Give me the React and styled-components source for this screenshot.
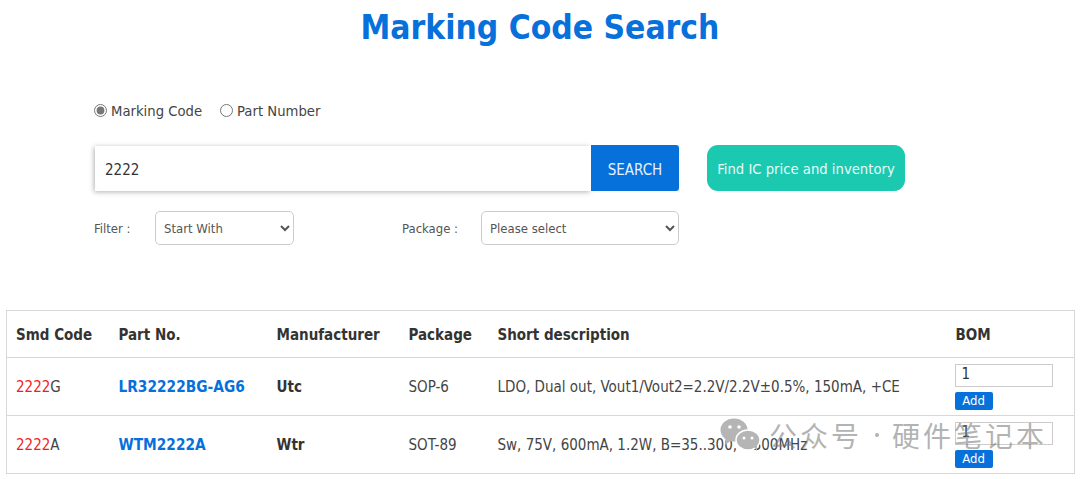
import React from 'react';
import styled, { createGlobalStyle } from 'styled-components';

const GlobalStyle = createGlobalStyle`
  html, body {
    margin: 0;
    padding: 0;
    background: #fff;
    overflow: hidden;
  }
  body {
    font-family: 'DejaVu Sans', 'Noto Sans', sans-serif;
    font-stretch: condensed;
    color: #333;
  }
`;

const Page = styled.div`
  position: relative;
  width: 1080px;
  height: 479px;
  overflow: hidden;
`;

const Title = styled.h1`
  margin: 0;
  padding-top: 7px;
  height: 45px;
  font-size: 33.3px;
  line-height: 42px;
  font-weight: 700;
  text-align: center;
  color: #0670db;
`;

const SearchForm = styled.form`
  display: flex;
  flex-direction: column;
  margin: 0;
  padding: 48px 0 0 94px;
  height: 258px;
  box-sizing: border-box;
`;

const RadioRow = styled.div`
  display: flex;
  align-items: center;
  gap: 18px;
  height: 20px;
  font-size: 14.7px;
  color: #444;
`;

const RadioLabel = styled.label`
  display: flex;
  align-items: center;
  gap: 4px;
`;

const Radio = styled.input.attrs({ type: 'radio', name: 'kind' })`
  width: 13px;
  height: 13px;
  margin: 0;
  accent-color: #777;
`;

const SearchRow = styled.div`
  display: flex;
  align-items: stretch;
  margin-top: 25px;
  height: 46px;
`;

const SearchInput = styled.input`
  width: 496px;
  margin: 1px 0 0 1px;
  height: 45px;
  box-sizing: border-box;
  padding: 3px 0 0 10px;
  border: 0;
  outline: 0;
  font-family: inherit;
  font-stretch: condensed;
  font-size: 15px;
  color: #333;
  background: #fff;
  box-shadow: -1px 1px 5px rgba(0, 0, 0, 0.3);
`;

const SearchButton = styled.button`
  width: 88px;
  border: 0;
  padding: 3px 0 0;
  border-radius: 0 3px 3px 0;
  background: #0670db;
  color: #e6f1fc;
  font-family: inherit;
  font-stretch: condensed;
  font-size: 15px;
`;

const PriceButton = styled.button`
  margin-left: 28px;
  width: 198px;
  border: 0;
  padding: 1px 0 0;
  border-radius: 11px;
  background: #1bc9b0;
  color: #eafaf7;
  font-family: inherit;
  font-stretch: condensed;
  font-size: 14.7px;
`;

const FilterRow = styled.div`
  display: flex;
  align-items: center;
  margin-top: 20px;
  height: 34px;
  font-size: 13px;
  color: #555;
`;

const FilterLabel = styled.span`
  width: ${({ $width }) => $width}px;
  margin-left: ${({ $gap }) => $gap || 0}px;
  box-sizing: border-box;
`;

const Select = styled.select`
  box-sizing: border-box;
  width: ${({ $width }) => $width}px;
  height: 34px;
  padding: 0 4px;
  border: 1px solid #ccc;
  border-radius: 5px;
  background: #fff;
  font-family: inherit;
  font-stretch: condensed;
  font-size: 13px;
  color: #555;
`;

const Table = styled.table`
  width: 1068px;
  margin-left: 6px;
  border-collapse: collapse;
  table-layout: fixed;
  border: 1px solid #d8d8d8;
`;

const Th = styled.th`
  width: ${({ $width }) => $width}px;
  height: 47px;
  padding: 1px 0 0 9px;
  box-sizing: border-box;
  text-align: left;
  font-size: 15px;
  font-weight: 700;
  color: #333;
`;

const Td = styled.td`
  height: 58px;
  padding: 0 0 0 9px;
  box-sizing: border-box;
  color: ${({ $strong }) => ($strong ? '#333' : '#444')};
  font-weight: ${({ $strong }) => ($strong ? 700 : 400)};
  font-size: 15px;
`;

const Row = styled.tr`
  border-top: 1px solid #d8d8d8;
`;

const Hit = styled.span`
  color: #f51c24;
`;

const PartLink = styled.a`
  color: #0670db;
  font-weight: 700;
  font-size: 15.3px;
`;

const BomCell = styled.div`
  display: flex;
  flex-direction: column;
  align-items: flex-start;
  gap: 5px;
  margin-left: -1px;
`;

const QtyInput = styled.input`
  box-sizing: border-box;
  width: 98px;
  height: 23px;
  margin: 0;
  padding: 0 0 2px 6px;
  border: 1px solid #ccc;
  outline: 0;
  font-family: inherit;
  font-stretch: condensed;
  font-size: 15px;
  color: #333;
`;

const AddButton = styled.button`
  width: 38px;
  height: 18px;
  border: 0;
  padding: 0;
  border-radius: 2px;
  background: #0670db;
  color: #fff;
  font-family: inherit;
  font-stretch: condensed;
  font-size: 13px;
  line-height: 18px;
`;

const Watermark = styled.div`
  position: absolute;
  left: 720px;
  top: 417px;
  display: flex;
  align-items: center;
  gap: 9px;
  height: 36px;
  font-family: 'Noto Sans CJK SC', sans-serif;
  font-size: 28px;
  letter-spacing: 3px;
  color: rgba(120, 120, 120, 0.58);
  white-space: nowrap;
  pointer-events: none;
`;

const WatermarkDot = styled.span`
  width: 4px;
  height: 4px;
  margin: 0 4px;
  border-radius: 50%;
  background: rgba(120, 120, 120, 0.58);
`;

const WatermarkText = styled.span`
  margin-left: ${({ $shift }) => $shift || 0}px;
`;

const WeChatIcon = () => (
  <svg width="42" height="34" viewBox="0 0 42 34">
    <ellipse cx="14" cy="12" rx="13.5" ry="11.5" fill="#b5b5b5" />
    <path d="M6 20 L5 27 L12 22 Z" fill="#b5b5b5" />
    <ellipse cx="28" cy="22" rx="12" ry="10" fill="#b5b5b5" stroke="#fff" strokeWidth="1.5" />
    <path d="M34 29 L37 33 L37 27 Z" fill="#b5b5b5" />
    <circle cx="10" cy="9" r="1.8" fill="#fff" />
    <circle cx="19" cy="9" r="1.8" fill="#fff" />
    <circle cx="24" cy="20" r="1.5" fill="#fff" />
    <circle cx="32" cy="20" r="1.5" fill="#fff" />
  </svg>
);

const rows = [
  {
    hit: '2222',
    rest: 'G',
    part: 'LR32222BG-AG6',
    maker: 'Utc',
    pack: 'SOP-6',
    desc: 'LDO, Dual out, Vout1/Vout2=2.2V/2.2V±0.5%, 150mA, +CE',
  },
  {
    hit: '2222',
    rest: 'A',
    part: 'WTM2222A',
    maker: 'Wtr',
    pack: 'SOT-89',
    desc: 'Sw, 75V, 600mA, 1.2W, B=35..300, >300MHz',
  },
];

export default function App() {
  return (
    <Page>
      <GlobalStyle />
      <Title>Marking Code Search</Title>
      <SearchForm>
        <RadioRow>
          <RadioLabel>
            <Radio defaultChecked />
            Marking Code
          </RadioLabel>
          <RadioLabel>
            <Radio />
            Part Number
          </RadioLabel>
        </RadioRow>
        <SearchRow>
          <SearchInput defaultValue="2222" />
          <SearchButton type="button">SEARCH</SearchButton>
          <PriceButton type="button">Find IC price and inventory</PriceButton>
        </SearchRow>
        <FilterRow>
          <FilterLabel $width={61}>Filter :</FilterLabel>
          <Select $width={139} defaultValue="start">
            <option value="start">Start With</option>
          </Select>
          <FilterLabel $width={79} $gap={108}>
            Package :
          </FilterLabel>
          <Select $width={198} defaultValue="">
            <option value="">Please select</option>
          </Select>
        </FilterRow>
      </SearchForm>
      <Table>
        <thead>
          <tr>
            <Th $width={103}>Smd Code</Th>
            <Th $width={158}>Part No.</Th>
            <Th $width={132}>Manufacturer</Th>
            <Th $width={89}>Package</Th>
            <Th $width={458}>Short description</Th>
            <Th $width={128}>BOM</Th>
          </tr>
        </thead>
        <tbody>
          {rows.map((row) => (
            <Row key={row.part}>
              <Td>
                <Hit>{row.hit}</Hit>
                {row.rest}
              </Td>
              <Td>
                <PartLink>{row.part}</PartLink>
              </Td>
              <Td $strong>{row.maker}</Td>
              <Td>{row.pack}</Td>
              <Td>{row.desc}</Td>
              <Td>
                <BomCell>
                  <QtyInput defaultValue="1" />
                  <AddButton type="button">Add</AddButton>
                </BomCell>
              </Td>
            </Row>
          ))}
        </tbody>
      </Table>
      <Watermark>
        <WeChatIcon />
        <WatermarkText $shift={-2}>公众号</WatermarkText>
        <WatermarkDot />
        <WatermarkText>硬件笔记本</WatermarkText>
      </Watermark>
    </Page>
  );
}
